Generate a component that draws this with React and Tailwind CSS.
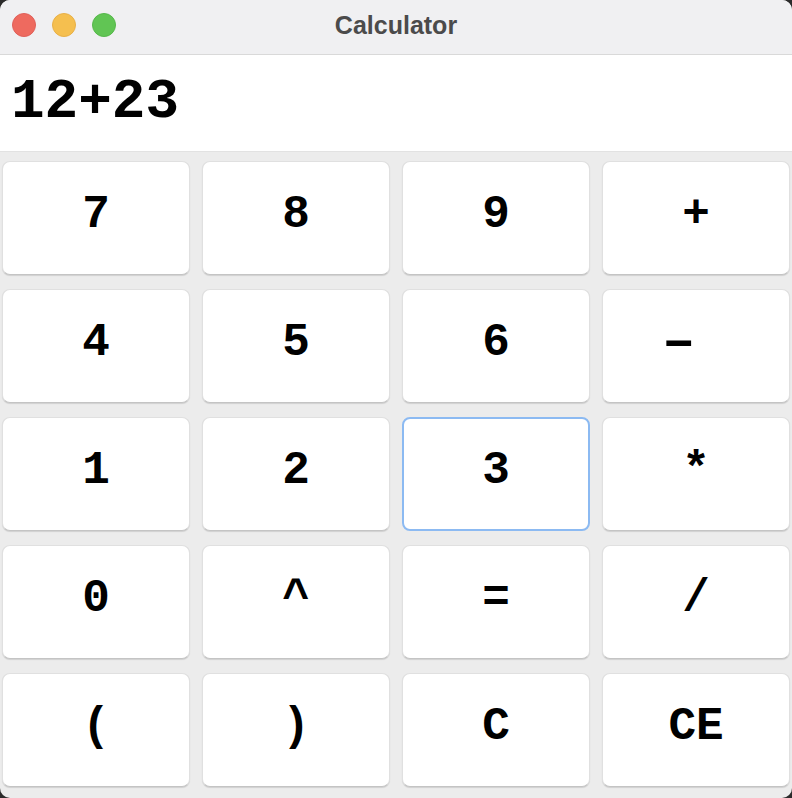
import React from "react";

const keys = [
  "7", "8", "9", "+",
  "4", "5", "6", "-",
  "1", "2", "3", "*",
  "0", "^", "=", "/",
  "(", ")", "C", "CE",
];

const Calculator = () => {
  return (
    <div className="w-[792px] h-[798px] bg-[#2b2b2b] overflow-hidden">
      <div className="w-full h-full flex flex-col rounded-[10px] overflow-hidden bg-[#ececec]">
        {/* Title bar */}
        <div className="relative h-[55px] shrink-0 bg-[#f0f0f2] border-b border-[#d9d9d9] flex items-center justify-center">
          <div className="absolute left-[12px] top-[13px] flex gap-[16px]">
            <span className="w-[24px] h-[24px] rounded-full bg-[#ee6a5f] border border-[#e0605a]"></span>
            <span className="w-[24px] h-[24px] rounded-full bg-[#f5bf4f] border border-[#e8b048]"></span>
            <span className="w-[24px] h-[24px] rounded-full bg-[#61c554] border border-[#56b84b]"></span>
          </div>
          <h1 className="text-[25px] font-bold text-[#4b4b4b] font-['Liberation_Sans',Arial,sans-serif] pb-[3px]">
            Calculator
          </h1>
        </div>

        {/* Display */}
        <div className="h-[97px] shrink-0 bg-white border-b border-[#e2e2e2] flex items-center pl-[11px]">
          <span className="text-[56px] font-bold text-black font-['Liberation_Mono','Courier_New',monospace] leading-none pb-[2px]">
            12+23
          </span>
        </div>

        {/* Keypad */}
        <div className="flex-1 px-[2px] pt-[9px] grid grid-cols-4 grid-rows-[repeat(5,114px)] gap-x-[12px] gap-y-[14px]">
          {keys.map((k) => (
            <button
              key={k}
              className={`rounded-[8px] bg-white flex items-center justify-center pb-[6px] text-[46px] font-bold text-black font-['Liberation_Mono','Courier_New',monospace] leading-none ${
                k === "3"
                  ? "border-2 border-[#8cbaf2]"
                  : "border border-[#e0e0e0] border-b-[#c4c4c4] shadow-[0_1px_1px_rgba(0,0,0,0.12)]"
              }`}
            >
              <span className={k === "-" ? "inline-block scale-x-[1.9] -translate-x-[17px]" : ""}>{k}</span>
            </button>
          ))}
        </div>
      </div>
    </div>
  );
};

export default Calculator;
